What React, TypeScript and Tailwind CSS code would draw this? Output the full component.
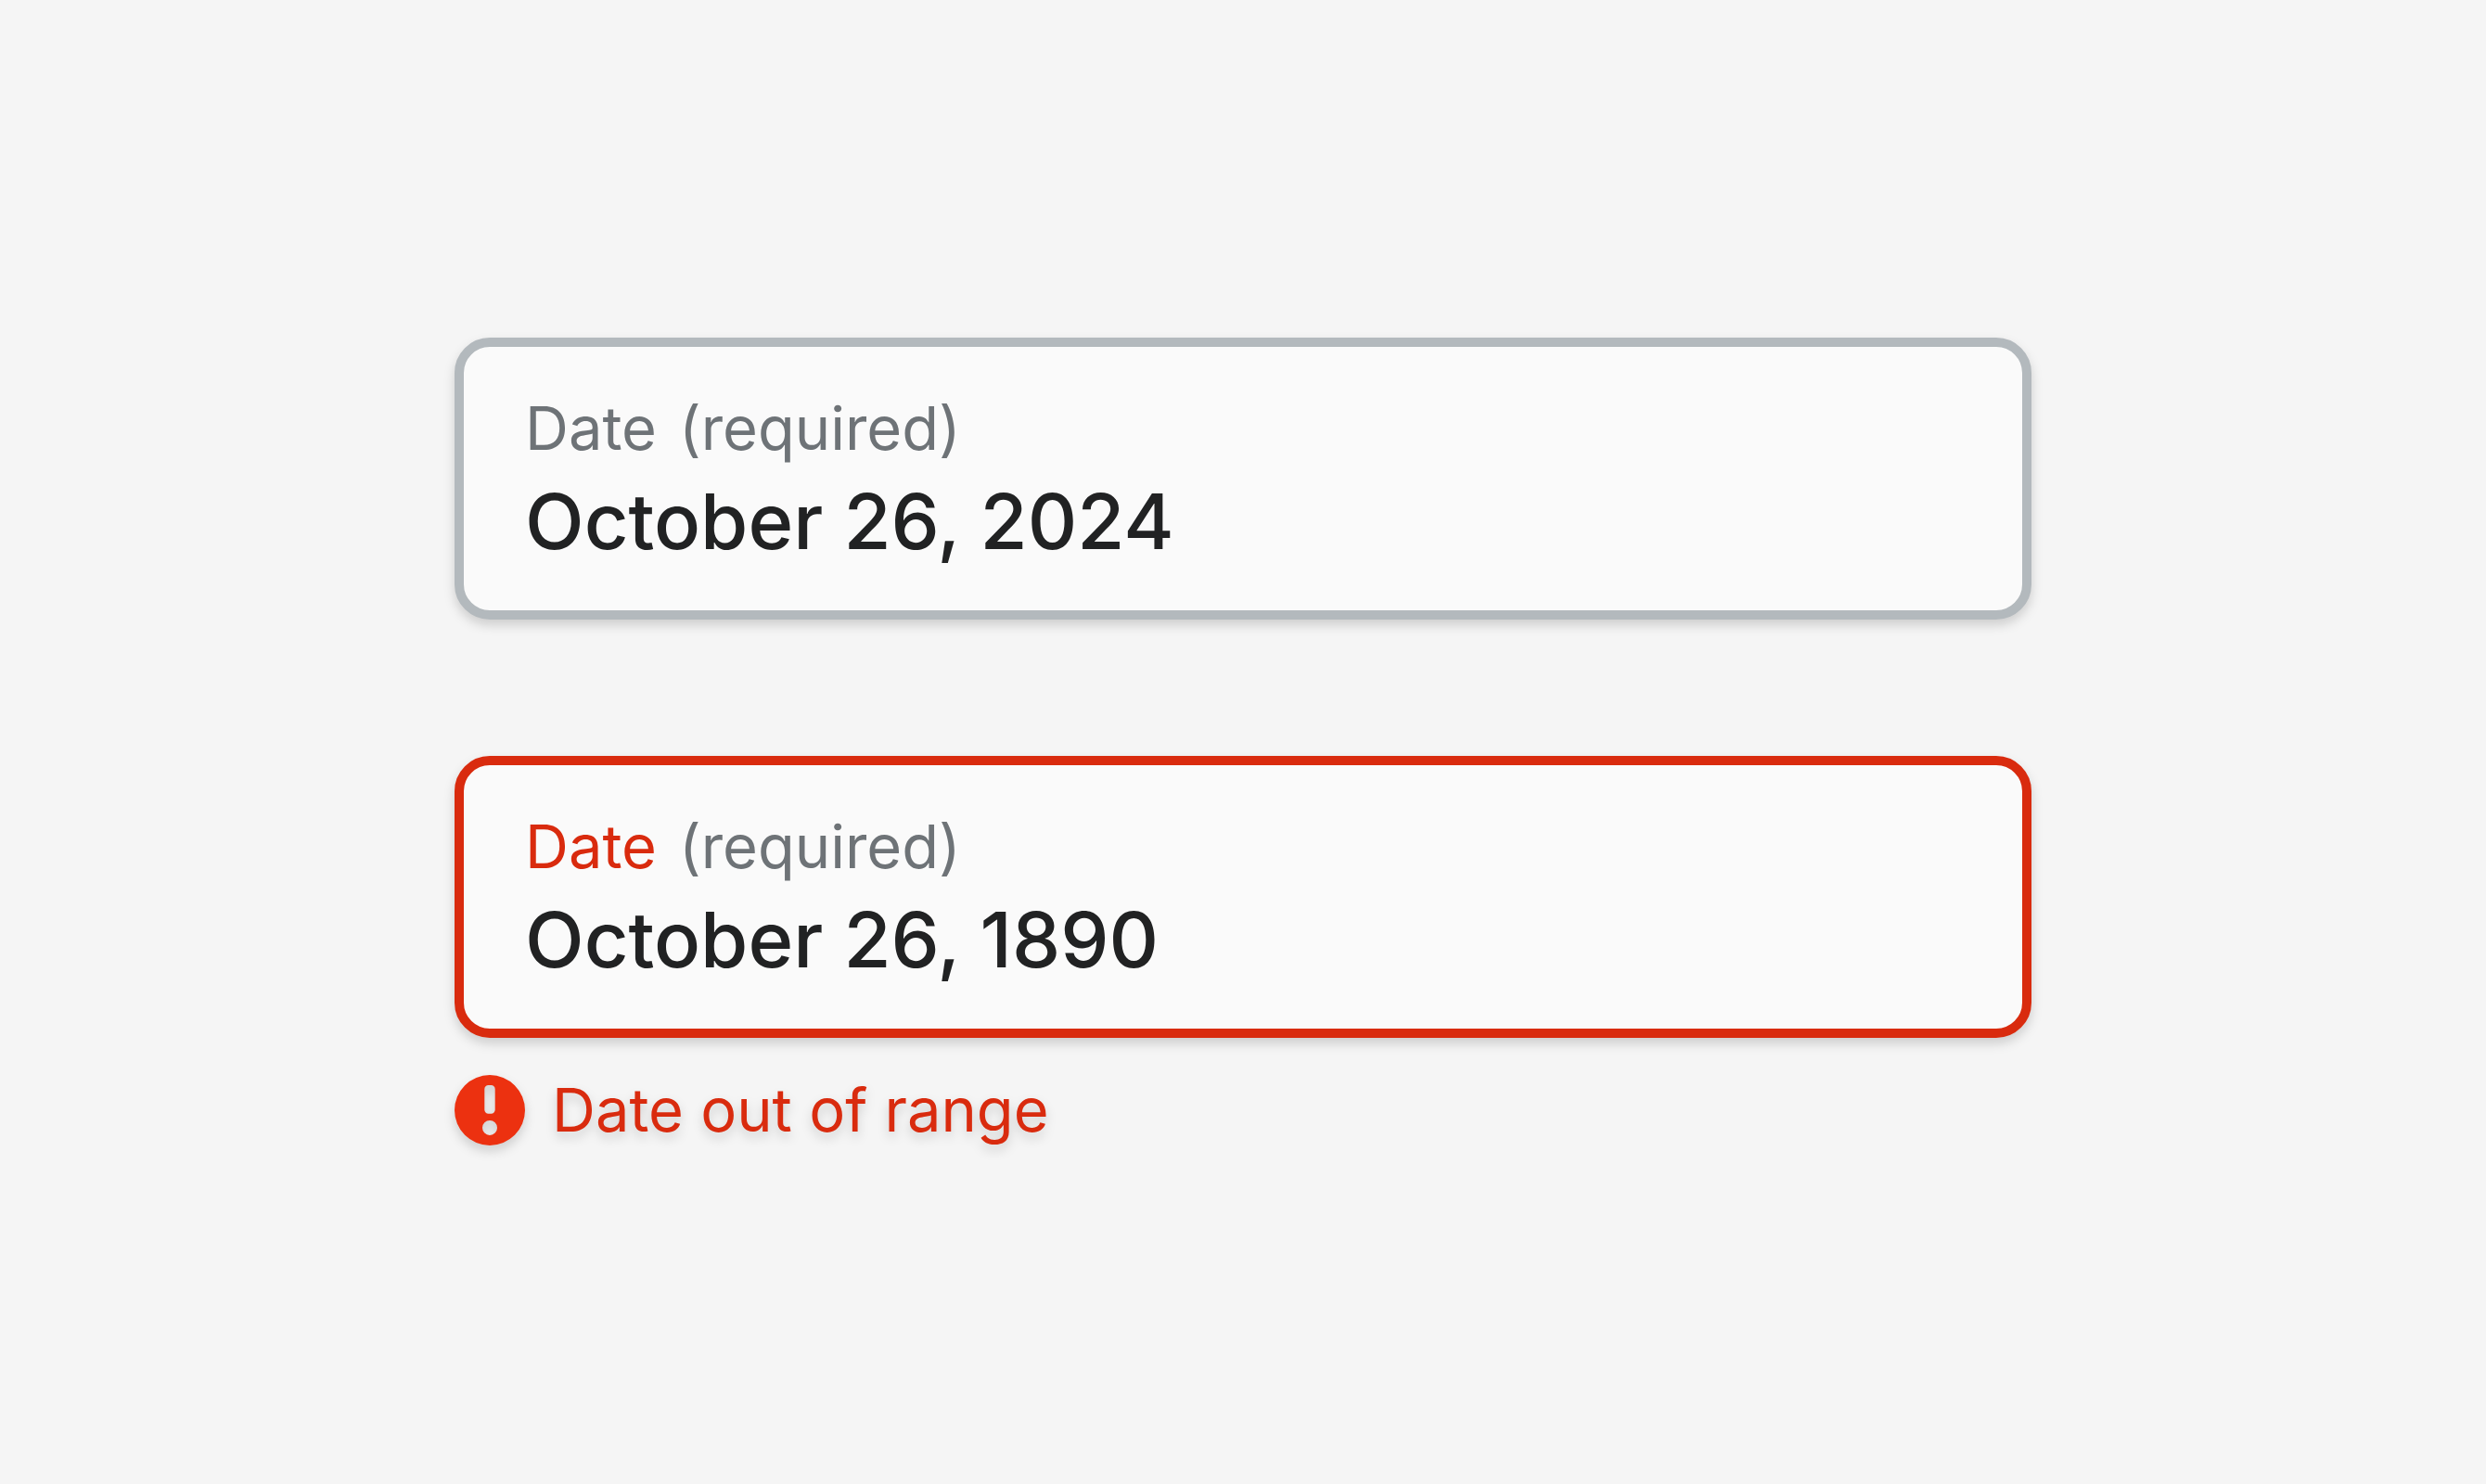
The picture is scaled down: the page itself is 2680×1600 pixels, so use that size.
import { useId, useState } from "react";

type DateFieldProps = {
  initialValue: string;
  error?: string;
};

function ErrorIcon() {
  return (
    <svg viewBox="0 0 76 76" className="size-[76px] shrink-0" aria-hidden="true">
      <path
        fill="#ec3110"
        fillRule="evenodd"
        d="M38 0a38 38 0 1 1 0 76a38 38 0 1 1 0-76Z
           M36.5 11h3a4.2 4.2 0 0 1 4.2 4.2v22.3a4.2 4.2 0 0 1-4.2 4.2h-3a4.2 4.2 0 0 1-4.2-4.2V15.2A4.2 4.2 0 0 1 36.5 11Z
           M38 48.9a8 8 0 1 1 0 16a8 8 0 1 1 0-16Z"
      />
    </svg>
  );
}

function DateField({ initialValue, error }: DateFieldProps) {
  const id = useId();
  const [value, setValue] = useState(initialValue);
  const invalid = Boolean(error);

  return (
    <div className="flex flex-col gap-10 drop-shadow-[0_6px_6px_rgba(0,0,0,0.16)]">
      <div
        className={
          invalid
            ? "flex flex-col rounded-[38px] border-10 border-[#d92b0e] bg-[#fafafa] px-[66px] pt-[46px] pb-[38px]"
            : "flex flex-col rounded-[38px] border-10 border-[#b3b9bd] bg-[#fafafa] px-[66px] pt-[46px] pb-[38px]"
        }
      >
        <label htmlFor={id} className="flex gap-6 text-[65px] leading-[84px] text-[#6e7377]">
          <span className={invalid ? "text-[#d92b0e]" : ""}>Date</span>
          <span>(required)</span>
        </label>
        <input
          id={id}
          type="text"
          required
          value={value}
          onChange={(event) => setValue(event.target.value)}
          aria-invalid={invalid}
          aria-describedby={invalid ? `${id}-error` : undefined}
          className="h-[116px] w-full bg-transparent text-[83px] font-medium text-[#212223] outline-none"
        />
      </div>
      {error && (
        <p id={`${id}-error`} className="flex items-center gap-[29px] text-[65px] leading-[76px] text-[#d92b0e]">
          <ErrorIcon />
          <span>{error}</span>
        </p>
      )}
    </div>
  );
}

export default function App() {
  return (
    <main className="flex min-h-screen flex-col items-center justify-center bg-[#f5f5f5] pb-px font-['Inter',sans-serif]">
      <form className="flex w-full max-w-[1700px] flex-col gap-[147px]">
        <DateField initialValue="October 26, 2024" />
        <DateField initialValue="October 26, 1890" error="Date out of range" />
      </form>
    </main>
  );
}
